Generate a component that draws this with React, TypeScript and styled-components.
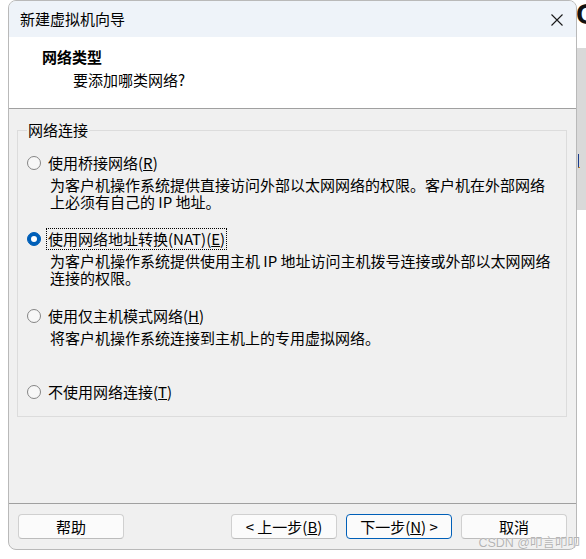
import React from "react";
import styled, { createGlobalStyle } from "styled-components";

const GlobalStyle = createGlobalStyle`
  html, body {
    margin: 0;
    padding: 0;
    background: #ffffff;
  }
  body {
    font-family: "Noto Sans CJK SC", "Noto Sans", sans-serif;
    font-size: 15px;
    color: #000;
  }
`;

const Page = styled.div`
  display: flex;
  height: 559px;
  overflow: hidden;
  position: relative;
`;

const Dialog = styled.div`
  box-sizing: border-box;
  width: 569px;
  height: 550px;
  margin-left: 8px;
  border: 1px solid #b9b9b9;
  border-radius: 8px;
  background: #f0f0f0;
  overflow: hidden;
  display: flex;
  flex-direction: column;
`;

const TitleBar = styled.div`
  height: 36px;
  background: #eef3f9;
  display: flex;
  align-items: center;
  justify-content: space-between;
  padding: 0 12px 0 11px;
  line-height: 20px;
`;

const CloseButton = styled.span`
  display: flex;
  width: 14px;
  height: 14px;
  margin-top: 2px;
`;

const Header = styled.div`
  height: 72px;
  background: #ffffff;
  border-bottom: 1px solid #a0a0a0;
  padding: 10px 0 0 33px;
  box-sizing: border-box;
`;

const HeaderTitle = styled.div`
  font-weight: bold;
  line-height: 20px;
`;

const HeaderSub = styled.div`
  padding-left: 31px;
  margin-top: 3px;
  line-height: 20px;
`;

const Body = styled.div`
  flex: 1;
  padding: 11px 9px 0 8px;
`;

const Group = styled.fieldset`
  margin: 0;
  border: 1px solid #dcdcdc;
  padding: 13px 0 14px 9px;
  min-inline-size: 0;
`;

const Legend = styled.legend`
  padding: 0 1px;
  line-height: 20px;
`;

const Option = styled.div<{ $space: number }>`
  margin-top: ${(p) => p.$space}px;
`;

const OptionRow = styled.div`
  display: flex;
  align-items: center;
  height: 20px;
`;

const Radio = styled.span<{ $checked?: boolean }>`
  box-sizing: border-box;
  width: 14px;
  height: 14px;
  border-radius: 50%;
  flex-shrink: 0;
  margin-right: 7px;
  display: flex;
  align-items: center;
  justify-content: center;
  background: ${(p) => (p.$checked ? "#005fb8" : "#f7f7f7")};
  border: 1px solid ${(p) => (p.$checked ? "#005fb8" : "#858585")};

  &::after {
    content: "";
    display: ${(p) => (p.$checked ? "block" : "none")};
    width: 6px;
    height: 6px;
    border-radius: 50%;
    background: #ffffff;
  }
`;

const Label = styled.span<{ $focused?: boolean }>`
  line-height: 20px;
  white-space: nowrap;
  outline: ${(p) => (p.$focused ? "1px dotted #000" : "none")};
  margin-left: ${(p) => (p.$focused ? "-1px" : "0")};
  padding: ${(p) => (p.$focused ? "0 1px" : "0")};
`;

const Desc = styled.div`
  margin-top: 3px;
  padding-left: 23px;
  line-height: 17px;
  white-space: nowrap;
`;

const Footer = styled.div`
  border-top: 1px solid #a0a0a0;
  padding: 10px 9px 10px 9px;
  display: flex;
  gap: 9px;
`;

const Button = styled.div<{ $primary?: boolean; $push?: boolean }>`
  box-sizing: border-box;
  width: 106px;
  height: 25px;
  border-radius: 4px;
  background: #fbfbfb;
  border: 1px solid ${(p) => (p.$primary ? "#005fb8" : "#d0d0d0")};
  border-bottom-color: ${(p) => (p.$primary ? "#005fb8" : "#bcbcbc")};
  display: flex;
  align-items: center;
  justify-content: center;
  line-height: 20px;
  white-space: nowrap;
  margin-left: ${(p) => (p.$push ? "auto" : "0")};
`;

const Strip = styled.div`
  flex: 1;
  display: flex;
  flex-direction: column;
  overflow: hidden;
`;

const StripTop = styled.div`
  height: 48px;
  background: #ffffff;
  overflow: hidden;
`;

const StripGlyph = styled.span`
  display: block;
  font-family: "Liberation Sans", sans-serif;
  font-weight: bold;
  font-size: 30px;
  line-height: 30px;
  margin: -1px 0 0 -1px;
  color: #111;
`;

const StripGray = styled.div`
  height: 162px;
  background: #d9d9d9;
  padding-top: 106px;
  box-sizing: border-box;
  overflow: hidden;
`;

const StripMark = styled.span`
  display: block;
  width: 2px;
  height: 14px;
  margin-left: 1px;
  border-left: 1px solid #1b3d8c;
  border-bottom: 1px solid #d98a1a;
  box-sizing: border-box;
`;

const Watermark = styled.div`
  position: absolute;
  right: 6px;
  top: 535px;
  font-size: 12.5px;
  line-height: 17px;
  color: #b4b4b4;
  font-family: "Liberation Sans", "Noto Sans CJK SC", sans-serif;
  text-shadow: 0 0 1px #ffffff;
  white-space: nowrap;
`;

const options = [
  {
    label: "使用桥接网络",
    key: "R",
    desc: ["为客户机操作系统提供直接访问外部以太网网络的权限。客户机在外部网络", "上必须有自己的 IP 地址。"],
    space: 0,
  },
  {
    label: "使用网络地址转换(NAT)",
    key: "E",
    desc: ["为客户机操作系统提供使用主机 IP 地址访问主机拨号连接或外部以太网网络", "连接的权限。"],
    space: 19,
    checked: true,
  },
  {
    label: "使用仅主机模式网络",
    key: "H",
    desc: ["将客户机操作系统连接到主机上的专用虚拟网络。"],
    space: 20,
  },
  {
    label: "不使用网络连接",
    key: "T",
    desc: [],
    space: 36,
  },
];

const App = () => {
  return (
    <>
      <GlobalStyle />
      <Page>
        <Dialog>
          <TitleBar>
            <span>新建虚拟机向导</span>
            <CloseButton>
              <svg width="14" height="14" viewBox="0 0 14 14">
                <path d="M1.5 1.5 L12.5 12.5 M12.5 1.5 L1.5 12.5" stroke="#1a1a1a" strokeWidth="1.1" />
              </svg>
            </CloseButton>
          </TitleBar>
          <Header>
            <HeaderTitle>网络类型</HeaderTitle>
            <HeaderSub>要添加哪类网络?</HeaderSub>
          </Header>
          <Body>
            <Group>
              <Legend>网络连接</Legend>
              {options.map((o) => (
                <Option key={o.key} $space={o.space}>
                  <OptionRow>
                    <Radio $checked={o.checked} />
                    <Label $focused={o.checked}>
                      {o.label}(<u>{o.key}</u>)
                    </Label>
                  </OptionRow>
                  {o.desc.length > 0 && (
                    <Desc>
                      {o.desc.map((line) => (
                        <div key={line}>{line}</div>
                      ))}
                    </Desc>
                  )}
                </Option>
              ))}
            </Group>
          </Body>
          <Footer>
            <Button>帮助</Button>
            <Button $push>
              &lt; 上一步(<u>B</u>)
            </Button>
            <Button $primary>
              下一步(<u>N</u>) &gt;
            </Button>
            <Button>取消</Button>
          </Footer>
        </Dialog>
        <Strip>
          <StripTop>
            <StripGlyph>C</StripGlyph>
          </StripTop>
          <StripGray>
            <StripMark />
          </StripGray>
        </Strip>
        <Watermark>CSDN @叩言叩叩</Watermark>
      </Page>
    </>
  );
};

export default App;
